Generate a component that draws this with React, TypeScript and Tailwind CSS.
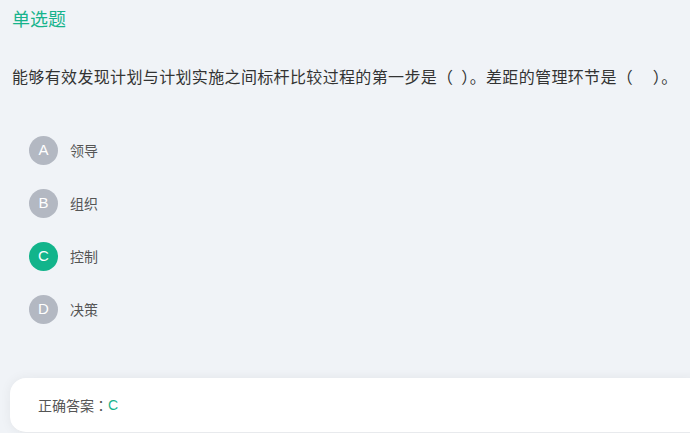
import React from "react";

interface Option {
  key: string;
  label: string;
}

const options: Option[] = [
  { key: "A", label: "领导" },
  { key: "B", label: "组织" },
  { key: "C", label: "控制" },
  { key: "D", label: "决策" },
];

const correct = "C";
const latin = { fontFamily: '"Liberation Sans", Arial, sans-serif' };

export default function App() {
  return (
    <div
      className="w-[690px] h-[433px] overflow-hidden bg-[#f0f3f7] flex flex-col"
      style={{ fontFamily: '"Noto Sans CJK SC", "Liberation Sans", sans-serif' }}
    >
      {/* Question type */}
      <div className="px-3 pt-[6px] text-[18px] leading-6 text-[#17b38c]">单选题</div>

      {/* Stem */}
      <div className="px-3 mt-[34px] text-[16px] tracking-[0.35px] leading-6 text-[#333] whitespace-nowrap">
        能够有效发现计划与计划实施之间标杆比较过程的第一步是（&nbsp;&nbsp;）。差距的管理环节是（&nbsp;&nbsp;&nbsp;&nbsp;&nbsp;）。
      </div>

      {/* Options */}
      <div className="mt-[48px] pl-[29px] flex flex-col gap-[24px]">
        {options.map((opt) => (
          <div key={opt.key} className="flex items-center gap-3">
            <div
              className={`w-[29px] h-[29px] rounded-full flex items-center justify-center text-white text-[15px] ${
                opt.key === correct ? "bg-[#12b48b]" : "bg-[#b3b8c2]"
              }`}
              style={latin}
            >
              {opt.key}
            </div>
            <span className="text-[14px] text-[#555]">{opt.label}</span>
          </div>
        ))}
      </div>

      {/* Answer card */}
      <div className="mt-auto ml-[10px] -mr-5 h-[55px] bg-white rounded-[16px] shadow-[0_0_12px_rgba(0,0,0,0.06)] flex items-center pl-[28px] text-[14px] text-[#555] border-b border-[#e8eaed]">
        正确答案
        <span style={{ fontFamily: '"Noto Sans CJK TC", sans-serif' }}>：</span>
        <span className="text-[#17b38c]" style={latin}>
          C
        </span>
      </div>
    </div>
  );
}
